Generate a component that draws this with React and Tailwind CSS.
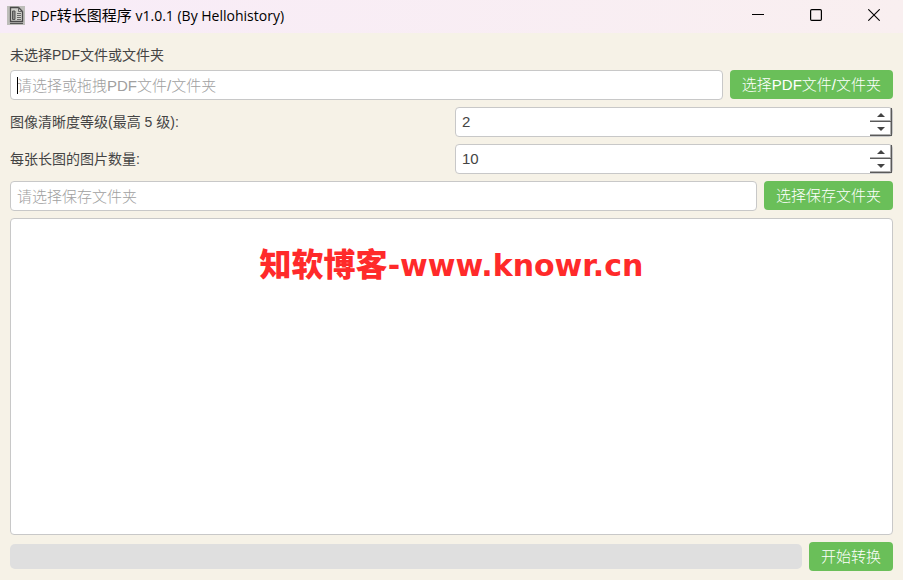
import React from 'react'

const fieldClass =
  'h-[30px] w-full min-w-0 rounded border border-[#c8c8c8] bg-white text-[15px] text-[#444] placeholder:text-[#a0a0a0] placeholder:opacity-100 outline-none'

function AppIcon() {
  return (
    <svg width="18" height="19" viewBox="0 0 18 19" aria-hidden="true">
      <rect width="18" height="19" fill="#bdbdb9" />
      <path d="M3.5 1.5h8l4 4v10h-12z" fill="#d0d0cc" stroke="#4a4a4a" strokeWidth="1.3" />
      <path d="M11.5 1.5v4h4" fill="none" stroke="#666" />
      <path d="M5.5 5v8.5h2.5V5z" fill="#8a8a88" stroke="#555" />
      <path d="M10 7.5h4M10 9.5h4M10 11.5h4M10 13.5h4" stroke="#666" />
      <path d="M3 17.5h13" stroke="#555" />
    </svg>
  )
}

function TitleBar() {
  const buttonClass = 'flex h-full w-[58px] items-center justify-center text-black hover:bg-black/5'
  return (
    <header className="flex h-[33px] shrink-0 items-center bg-linear-to-r from-[#f8ecf8] to-[#f9eff0] pb-[3px] pl-[7px]">
      <AppIcon />
      <h1 className="ml-1.5 flex-1 whitespace-nowrap font-['Open_Sans','Noto_Sans_CJK_SC',sans-serif] text-[14px] leading-5 font-normal text-black">
        PDF<span className="text-[15px]">转长图程序</span> v1.0.1 (By Hellohistory)
      </h1>
      <div className="flex h-[30px]">
        <button type="button" aria-label="最小化" className={buttonClass}>
          <svg width="12" height="12" viewBox="0 0 12 12">
            <path d="M0 5.5h12" stroke="currentColor" />
          </svg>
        </button>
        <button type="button" aria-label="最大化" className={buttonClass}>
          <svg width="12" height="12" viewBox="0 0 12 12">
            <rect x="0.6" y="0.6" width="10.8" height="10.8" rx="1.2" fill="none" stroke="currentColor" strokeWidth="1.2" />
          </svg>
        </button>
        <button type="button" aria-label="关闭" className={buttonClass}>
          <svg width="12" height="12" viewBox="0 0 12 12">
            <path d="M0.3 0.3l11.4 11.4M11.7 0.3L0.3 11.7" stroke="currentColor" strokeWidth="1.1" />
          </svg>
        </button>
      </div>
    </header>
  )
}

function GreenButton({ children }) {
  return (
    <button
      type="button"
      className="h-[29px] shrink-0 whitespace-nowrap rounded bg-[#6abf59] px-3 text-[15px] leading-5 text-white hover:bg-[#5cae4c]"
    >
      {children}
    </button>
  )
}

function StepButton({ up, label, onClick }) {
  return (
    <button
      type="button"
      aria-label={label}
      onClick={onClick}
      className="flex flex-1 items-center justify-center border-r border-b border-[#5a5a5a] shadow-[inset_-1px_-1px_0_#b0b0b0]"
    >
      <svg width="8" height="4" viewBox="0 0 8 4" className={up ? '' : 'rotate-180'}>
        <path d="M0 4L4 0l4 4z" fill="#444" />
      </svg>
    </button>
  )
}

function SpinRow({ id, label, initial, min, max }) {
  const [value, setValue] = React.useState(initial)
  const step = (d) => setValue((v) => Math.min(max, Math.max(min, Number(v) + d)))

  return (
    <div className="grid grid-cols-2 items-center gap-[7px]">
      <label htmlFor={id} className="text-[14px] leading-5 font-normal">{label}</label>
      <div className="flex h-[30px] rounded border border-[#c8c8c8] bg-white">
        <input
          id={id}
          type="number"
          min={min}
          max={max}
          value={value}
          onChange={(e) => setValue(e.target.value)}
          className="min-w-0 flex-1 rounded bg-transparent pl-1.5 text-[15px] text-[#444] outline-none [appearance:textfield] [&::-webkit-inner-spin-button]:appearance-none"
        />
        <div className="flex w-[22px] flex-col">
          <StepButton up label="增加" onClick={() => step(1)} />
          <StepButton label="减少" onClick={() => step(-1)} />
        </div>
      </div>
    </div>
  )
}

const App = () => {
  return (
    <div className="flex min-h-screen flex-col bg-[#f6f2e7] font-['Liberation_Sans','Noto_Sans_CJK_SC',sans-serif] font-light text-[#444]">
      <TitleBar />
      <main className="flex flex-1 flex-col gap-[7px] px-2.5 pt-3 pb-[9px]">
        <label htmlFor="source" className="h-[18px] text-[14px] leading-5 font-normal">未选择PDF文件或文件夹</label>

        <div className="flex gap-[7px]">
          <div className="relative flex-1">
            <input id="source" type="text" placeholder="请选择或拖拽PDF文件/文件夹" className={`${fieldClass} px-1.5`} />
            {/* text cursor */}
            <span className="absolute top-[7px] left-[7px] h-[17px] w-px bg-black" />
          </div>
          <GreenButton>选择PDF文件/文件夹</GreenButton>
        </div>

        <SpinRow id="quality" label="图像清晰度等级(最高 5 级):" initial={2} min={1} max={5} />
        <SpinRow id="count" label="每张长图的图片数量:" initial={10} min={1} max={999} />

        <div className="flex gap-[7px]">
          <input type="text" aria-label="保存文件夹" placeholder="请选择保存文件夹" className={`${fieldClass} flex-1 px-1.5`} />
          <GreenButton>选择保存文件夹</GreenButton>
        </div>

        <div className="relative flex flex-1">
          <textarea
            readOnly
            aria-label="日志"
            className="min-h-40 flex-1 resize-none rounded border border-[#c8c8c8] bg-white p-2 text-[15px] outline-none"
          />
          <p className="pointer-events-none absolute inset-x-0 top-5 text-center font-['DejaVu_Sans','Noto_Sans_CJK_SC',sans-serif] text-[30px] leading-[48px] font-bold whitespace-nowrap text-[#ff2a2a]">
            <span className="font-['Noto_Sans_CJK_SC',sans-serif] text-[32px] font-black">知软博客</span>-www.knowr.cn
          </p>
        </div>

        <div className="flex items-center gap-[7px]">
          <div role="progressbar" aria-label="进度" aria-valuenow={0} aria-valuemin={0} aria-valuemax={100} className="h-[25px] flex-1 rounded-[5px] bg-[#dfdfdf]" />
          <GreenButton>开始转换</GreenButton>
        </div>
      </main>
    </div>
  )
}

export default App
